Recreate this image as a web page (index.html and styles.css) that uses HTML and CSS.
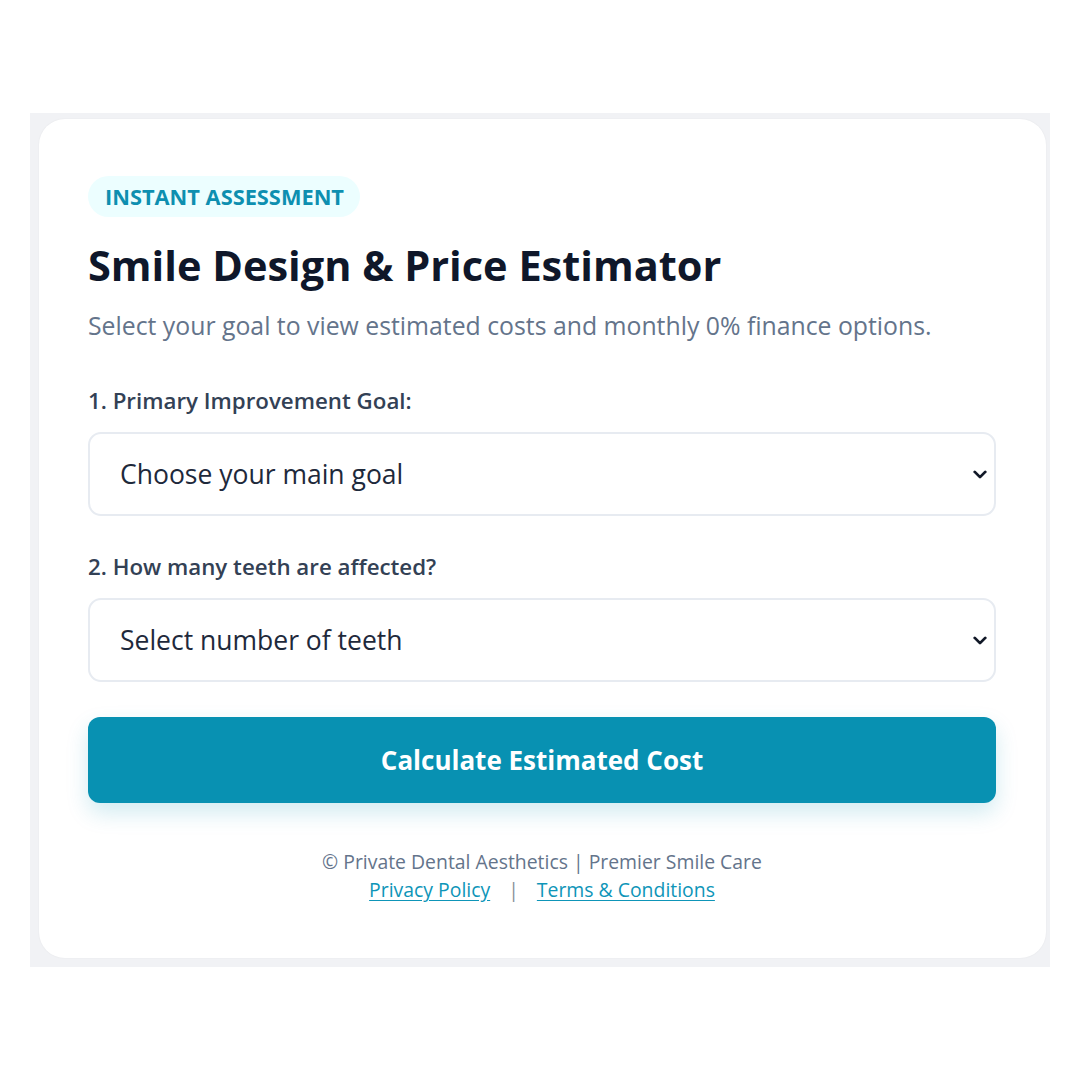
FILE: index.html
```html
<!DOCTYPE html>
<html lang="en">
<head>
<meta charset="utf-8">
<title>Smile Design &amp; Price Estimator</title>
<link rel="stylesheet" href="styles.css">
</head>
<body>
<div class="stage">
  <div class="panel">
    <div class="card">
      <span class="badge">INSTANT ASSESSMENT</span>
      <h1 class="title">Smile Design &amp; Price Estimator</h1>
      <p class="subtitle">Select your goal to view estimated costs and monthly 0% finance options.</p>

      <label class="label" for="goal">1. Primary Improvement Goal:</label>
      <div class="select-wrap">
        <select id="goal" class="select">
          <option>Choose your main goal</option>
        </select>
        <svg class="chevron" viewBox="0 0 16 10" width="14" height="9" aria-hidden="true"><path d="M2 2l6 6 6-6" fill="none" stroke="#111827" stroke-width="3.2" stroke-linecap="round" stroke-linejoin="round"/></svg>
      </div>

      <label class="label label-second" for="teeth">2. How many teeth are affected?</label>
      <div class="select-wrap">
        <select id="teeth" class="select">
          <option>Select number of teeth</option>
        </select>
        <svg class="chevron" viewBox="0 0 16 10" width="14" height="9" aria-hidden="true"><path d="M2 2l6 6 6-6" fill="none" stroke="#111827" stroke-width="3.2" stroke-linecap="round" stroke-linejoin="round"/></svg>
      </div>

      <button class="cta" type="button">Calculate Estimated Cost</button>

      <footer class="foot">
        <div>© Private Dental Aesthetics | Premier Smile Care</div>
        <div class="links"><a href="#">Privacy Policy</a><span class="sep">|</span><a href="#">Terms &amp; Conditions</a></div>
      </footer>
    </div>
  </div>
</div>
</body>
</html>
```

FILE: styles.css
```css
* { box-sizing: border-box; }
html, body { margin: 0; padding: 0; background: #ffffff; }
body {
  font-family: "Open Sans", "Noto Sans", "Liberation Sans", sans-serif;
  width: 1080px;
  height: 1080px;
}
.stage {
  padding: 113px 30px 0 30px;
}
.panel {
  background: #f1f2f5;
  padding: 6px 4px 9px 9px;
  height: 854px;
}
.card {
  background: #ffffff;
  border-radius: 26px;
  height: 839px;
  padding: 57px 50px 0 49px;
  display: flex;
  flex-direction: column;
  align-items: flex-start;
  box-shadow: 0 0 2px rgba(15, 23, 42, 0.06);
}
.badge {
  display: inline-block;
  background: #ecfeff;
  color: #0e8fb0;
  font-weight: 700;
  font-size: 21.8px;
  line-height: 41px;
  height: 41px;
  padding: 0 16px 0 17px;
  border-radius: 21px;
}
.title {
  margin: 22px 0 0 0;
  font-size: 41.5px;
  font-weight: 700;
  color: #0f172a;
  line-height: 52px;
}
.subtitle {
  margin: 17px 0 0 0;
  font-size: 24.8px;
  color: #64748b;
  line-height: 34px;
}
.label {
  margin-top: 45px;
  font-size: 22.3px;
  font-weight: 600;
  color: #334155;
  line-height: 28px;
}
.label + .select-wrap { margin-top: 17px; }
.select-wrap + .label-second { margin-top: 37px; }
.select-wrap {
  position: relative;
  width: 100%;
}
.select {
  -webkit-appearance: none;
  appearance: none;
  width: 100%;
  height: 84px;
  border: 2px solid #e7ebf1;
  border-radius: 13px;
  background: #ffffff;
  font-family: inherit;
  font-size: 26.5px;
  color: #1e293b;
  padding: 0 30px;
  display: block;
}
.chevron {
  position: absolute;
  right: 9px;
  top: 38px;
}
.cta {
  margin-top: 35px;
  width: 100%;
  height: 86px;
  border: none;
  border-radius: 12px;
  background: #0891b2;
  color: #ffffff;
  font-family: inherit;
  font-weight: 700;
  font-size: 26px;
  box-shadow: 0 10px 22px rgba(8, 145, 178, 0.18);
}
.foot {
  align-self: stretch;
  margin-top: 45px;
  text-align: center;
  font-size: 19.4px;
  color: #64748b;
  line-height: 28px;
}
.links a {
  color: #0e95b8;
  text-decoration: underline;
  text-underline-offset: 3px;
}
.sep {
  color: #8a8f98;
  margin: 0 18px;
}
```
